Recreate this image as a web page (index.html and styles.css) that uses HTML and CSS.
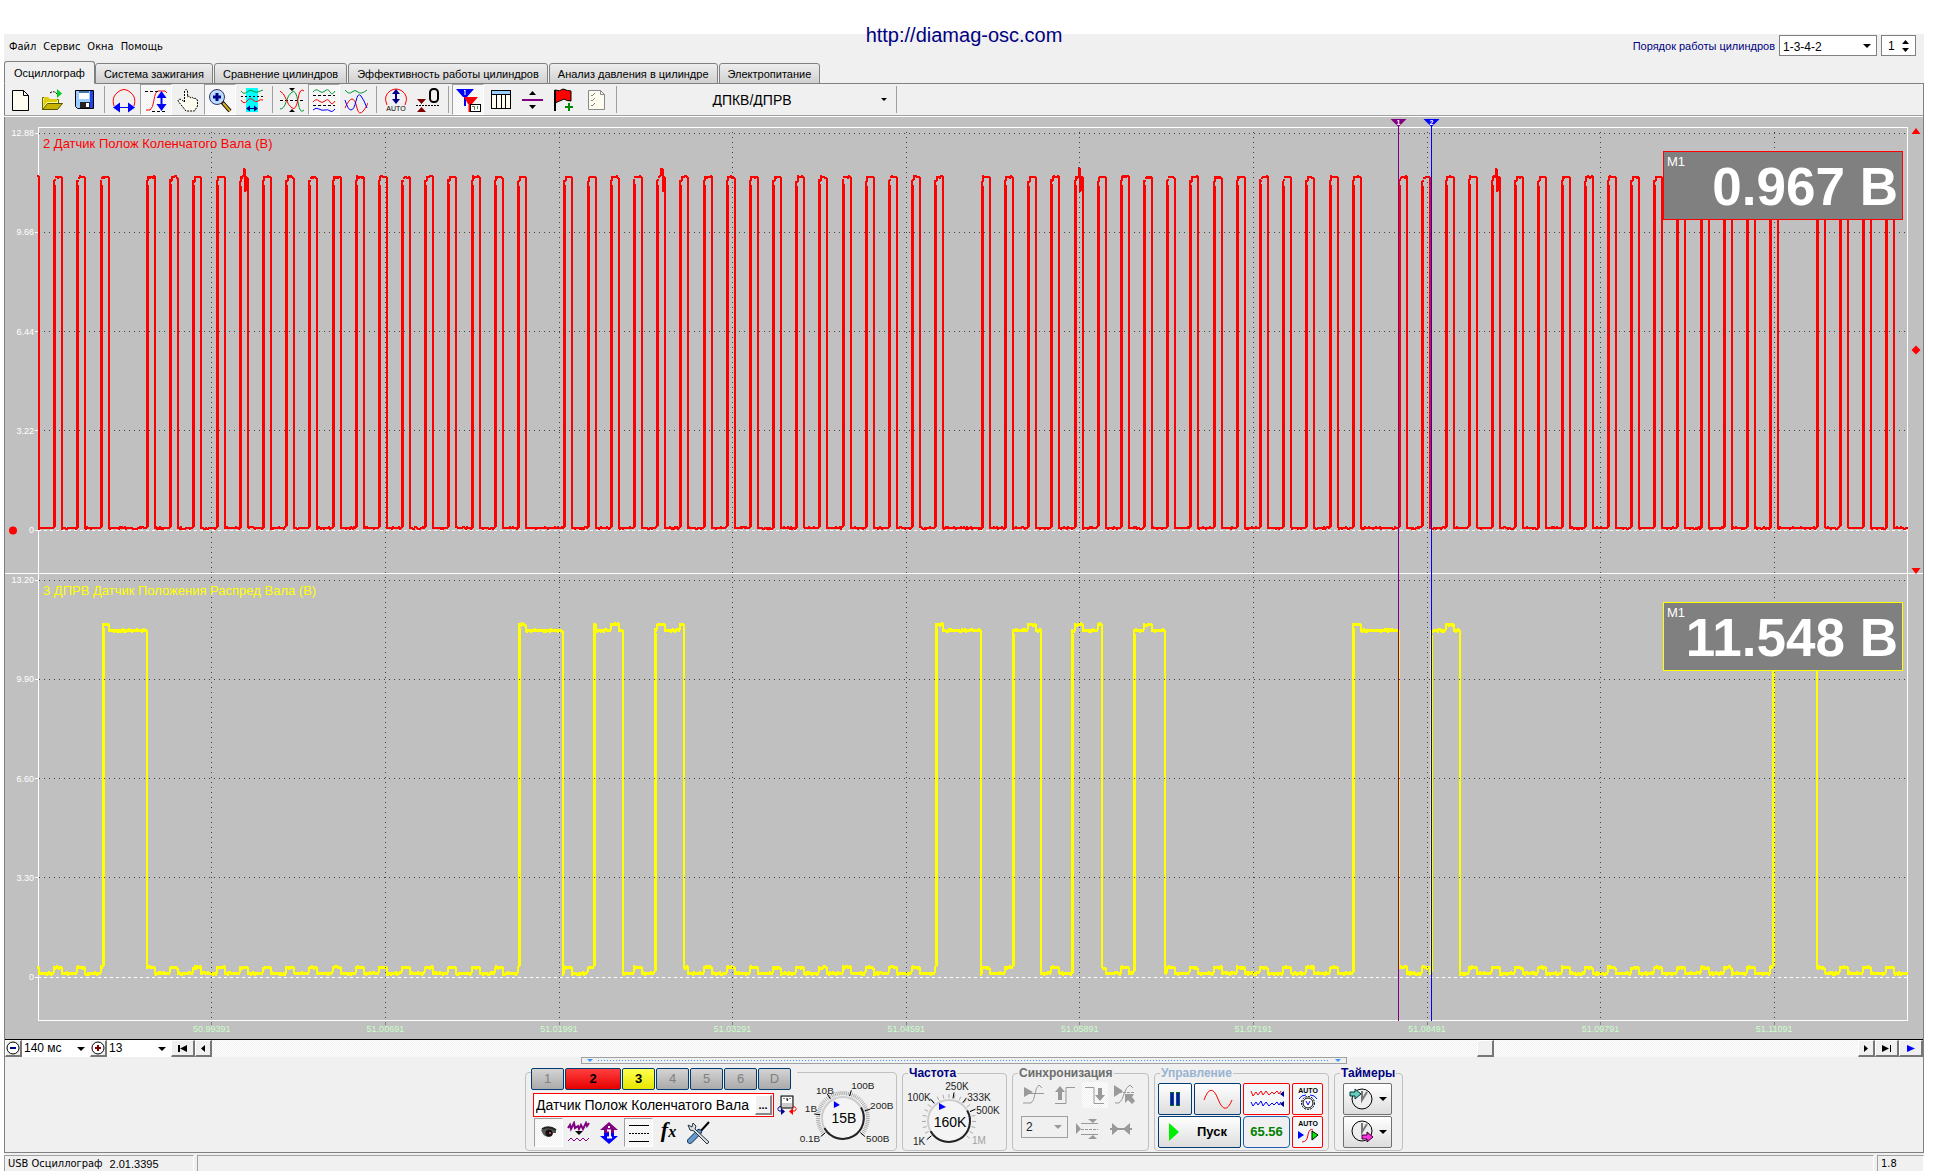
FILE: index.html
```html
<!DOCTYPE html>
<html lang="ru">
<head>
<meta charset="utf-8">
<title>USB Осциллограф</title>
<link rel="stylesheet" href="styles.css">
</head>
<body>
<div class="window">
  <a class="site-link" href="http://diamag-osc.com">http://diamag-osc.com</a>

  <header class="menubar">
    <nav class="menu">
      <button>Файл</button><button>Сервис</button><button>Окна</button><button>Помощь</button>
    </nav>
    <div class="firing">
      <label for="order">Порядок работы цилиндров</label>
      <select id="order" class="field order"><option>1-3-4-2</option></select>
      <div class="spin field">
        <input type="text" value="1" aria-label="Номер цилиндра">
        <svg width="8" height="14" viewBox="0 0 8 14"><path d="M0 5h7L3.500 1zM0 9h7L3.500 13z"/></svg>
      </div>
    </div>
  </header>

  <div class="tabs" role="tablist">
    <button class="tab active" role="tab">Осциллограф</button>
    <button class="tab" role="tab">Система зажигания</button>
    <button class="tab" role="tab">Сравнение цилиндров</button>
    <button class="tab" role="tab">Эффективность работы цилиндров</button>
    <button class="tab" role="tab">Анализ давления в цилиндре</button>
    <button class="tab" role="tab">Электропитание</button>
  </div>

  <main class="page">
    <div class="toolbar">
      <button class="tool" aria-label="Новый"><svg viewBox="0 0 24 24"><path d="M4.500 2.500h11l5 5v15h-16z" fill="#fffdf0" stroke="#000"/><path d="M15.500 2.500v5h5" fill="none" stroke="#000"/></svg></button>
      <button class="tool" aria-label="Открыть"><svg viewBox="0 0 24 24"><path d="M2.500 21.500v-12h5l2 2h9v4" fill="#ff9" stroke="#660"/><path d="M2.500 21.500l5-6h15l-5 6z" fill="#c8b400" stroke="#550"/><path d="M4 9h4l2 2h7v3H7l-4 5z" fill="#e0cc10"/><path d="M17 1v9l5-4.500z" fill="#0c2"/><path d="M10 5q4-3 7 1" fill="none" stroke="#000" stroke-dasharray="2 1"/></svg></button>
      <button class="tool" aria-label="Сохранить"><svg viewBox="0 0 24 24"><path d="M3.500 2.500h18v18h-16l-2-2z" fill="#9cf" stroke="#000"/><path d="M18 3h3v17h-3z" fill="#24e"/><path d="M7 3h10v8H7z" fill="#fff"/><path d="M7 3h10v2H7z" fill="#47a"/><path d="M8 14h10v6H8z" fill="#222"/><path d="M14 15h3v4h-3z" fill="#fff"/></svg></button>
      <span class="sep"></span>
      <button class="tool" aria-label="Ширина"><svg viewBox="0 0 24 24"><path d="M2 18Q-1 9 6 4Q12-1 18 4Q25 9 22 18" fill="none" stroke="red"/><path d="M7 19.500h10" stroke="#00f"/><path d="M1 19.500l7-5v10zM23 19.500l-7-5v10z" fill="#00f"/></svg></button>
      <button class="tool on" aria-label="Высота"><svg viewBox="0 0 24 24"><path d="M2 22h4q3-2 4-10T14 3h7l2 2" fill="none" stroke="red"/><path d="M1 3.500h14M8 23.500h14" stroke="#000" stroke-dasharray="3 2"/><path d="M17.500 8v10" stroke="#00f" stroke-width="2"/><path d="M17.500 3l5 7h-10zM17.500 23l5-7h-10z" fill="#00f"/></svg></button>
      <button class="tool" aria-label="Рука"><svg viewBox="0 0 24 24"><path d="M8.500 14V3q2-3 3 0v6q2-2 3 1q2-2 3 1q3-2 4 2v5l-3 5H10l-4-5-4-5q1-3 4-1z" fill="#fffdf0" stroke="#000" stroke-dasharray="2 1"/></svg></button>
      <button class="tool on" aria-label="Масштаб"><svg viewBox="0 0 24 24"><path d="M14 14l8 9" stroke="#000" stroke-width="4"/><path d="M15 15l7 8" stroke="#da2" stroke-width="2"/><circle cx="9" cy="9" r="7.500" fill="#bdf" stroke="#336"/><path d="M9 5v8M5 9h8" stroke="#008" stroke-width="3"/></svg></button>
      <button class="tool" aria-label="Окно времени"><svg viewBox="0 0 24 24"><path d="M6 0h12v24H6z" fill="#0ff"/><path d="M1 3q3 4 6 1t6-1 5 1 5-2" fill="none" stroke="#093"/><path d="M1 12q3 5 6 1t6-1 5 1 5-1" fill="none" stroke="red"/><path d="M1 8.500h22" stroke="#000" stroke-dasharray="2 2"/><path d="M8 20.500h8" stroke="#008"/><path d="M6 20.500l4-3v6zM18 20.500l-4-3v6z" fill="#008"/></svg></button>
      <span class="sep"></span>
      <button class="tool" aria-label="Слияние"><svg viewBox="0 0 24 24"><path d="M0 12.500h24" stroke="#000" stroke-dasharray="3 2"/><path d="M0 21q4 0 6-7T12 4t6 10 6 8" fill="none" stroke="#093"/><path d="M0 3q4 2 6 8t6 9 6-9 6-8" fill="none" stroke="red"/><path d="M9 0h6l-3 3zM9 24h6l-3-3z"/></svg></button>
      <button class="tool on" aria-label="Раздельно"><svg viewBox="0 0 24 24"><path d="M1 4q3-4 6-1t6 0 5 1 5-1" fill="none" stroke="#093"/><path d="M1 14q3-4 6-1t6 0 5 1 5-1" fill="none" stroke="red"/><path d="M1 22q3-3 6-1t6 1 5 1 5-2" fill="none" stroke="#00f"/><path d="M1 7.500h22M1 17.500h22" stroke="#000" stroke-dasharray="3 2"/></svg></button>
      <button class="tool" aria-label="Наложение"><svg viewBox="0 0 24 24"><path d="M1 2q4 5 7 2t6 0 9-2" fill="none" stroke="#093"/><path d="M1 20q4-9 7-9t5 9 7 2 3-7" fill="none" stroke="red"/><path d="M1 12q3 10 6 10t5-9 5-5 6 12" fill="none" stroke="#00f"/></svg></button>
      <span class="sep"></span>
      <button class="tool" aria-label="Авто"><svg viewBox="0 0 24 24"><path d="M3 17Q-1 8 6 3Q12-1 18 3Q25 8 21 17" fill="none" stroke="red"/><path d="M12 5v8" stroke="#008" stroke-width="2"/><path d="M12 1l4 5H8zM12 16l4-5H8z" fill="#008"/><text x="12" y="23" text-anchor="middle" class="tiny">AUTO</text></svg></button>
      <button class="tool" aria-label="Ноль"><svg viewBox="0 0 24 24"><path d="M1 11h9l-4.500 5zM1 24h9l-4.500-5z" fill="#800000"/><path d="M0 17.500h24" stroke="#000" stroke-dasharray="2 1"/><rect x="14" y="1" width="8" height="13" rx="3.500" fill="none" stroke="#000" stroke-width="2"/></svg></button>
      <span class="sep"></span>
      <button class="tool on" aria-label="Маркеры"><svg viewBox="0 0 24 24"><path d="M0 1h18l-7 8H7z" fill="#00f"/><path d="M9 8v10" stroke="#00f" stroke-width="2"/><path d="M8 9h14l-6 7h-4z" fill="red"/><path d="M13.500 14v10" stroke="red" stroke-width="2"/><path d="M8 3l1-1v5" stroke="#fff" fill="none"/><rect x="14.500" y="16.500" width="10" height="7" fill="#fff" stroke="#000"/><path d="M16 18.500h3M18.500 18v4M21.500 18v3" stroke="#585"/></svg></button>
      <button class="tool" aria-label="Таблица"><svg viewBox="0 0 24 24"><rect x="3.500" y="2.500" width="19" height="18" fill="#fffdf0" stroke="#000"/><path d="M4 3h18v3H4z" fill="#9cf"/><path d="M4 6.500h18M8.500 7v14M13.500 7v14M17.500 7v14" stroke="#000"/></svg></button>
      <button class="tool" aria-label="Разделитель"><svg viewBox="0 0 24 24"><path d="M2 12h21" stroke="#800080" stroke-width="2"/><path d="M9 7h7l-3.500-4zM9 17h7l-3.500 4z"/></svg></button>
      <button class="tool" aria-label="Добавить метку"><svg viewBox="0 0 24 24"><path d="M3 2q5 2 8-1 5 2 8 2v10q-4 0-7-2-4 2-9 4z" fill="red" stroke="#000"/><path d="M3 2v21" stroke="#000" stroke-width="2"/><path d="M17 15v8M13 19h8" stroke="#080" stroke-width="2"/></svg></button>
      <button class="tool" aria-label="Список"><svg viewBox="0 0 24 24"><path d="M4.500 2.500h12l4 4v15h-16z" fill="#fffdf0" stroke="#888"/><path d="M16.500 2.500v4h4" fill="none" stroke="#888"/><path d="M7 7l1 1 3-3M7 12l1 1 3-3M7 17l1 1 3-3" fill="none" stroke="#888"/></svg></button>
      <span class="sep"></span>
      <select class="preset" aria-label="Режим"><option>ДПКВ/ДПРВ</option></select>
      <span class="sep"></span>
    </div>

    <section class="scope" id="scope">
      <svg class="plot" id="plot"></svg>
      <div class="gutter"></div>
      <div class="track red">
        <div class="scale"><span>12.88</span><span>9.66</span><span>6.44</span><span>3.22</span><span>0</span></div>
        <h2>2 Датчик Полож Коленчатого Вала (В)</h2>
        <div class="meter"><small>M1</small><output>0.967 В</output></div>
      </div>
      <div class="track yellow">
        <div class="scale"><span>13.20</span><span>9.90</span><span>6.60</span><span>3.30</span><span>0</span></div>
        <h2>3 ДПРВ Датчик Положения Распред Вала (В)</h2>
        <div class="meter"><small>M1</small><output>11.548 В</output></div>
      </div>
      <div class="times">
        <span>50.99391</span><span>51.00691</span><span>51.01991</span><span>51.03291</span><span>51.04591</span><span>51.05891</span><span>51.07191</span><span>51.08491</span><span>51.09791</span><span>51.11091</span>
      </div>
    </section>

    <div class="timebar">
      <button class="step" aria-label="Меньше"><svg width="14" height="14" viewBox="0 0 14 14"><circle cx="7" cy="7" r="6" fill="#fff" stroke="#000"/><path d="M4 7h6" stroke="#008" stroke-width="2"/></svg></button>
      <select class="span" aria-label="Развёртка"><option>140  мс</option></select>
      <button class="step" aria-label="Больше"><svg width="14" height="14" viewBox="0 0 14 14"><circle cx="7" cy="7" r="6" fill="#fff" stroke="#000"/><path d="M4 7h6M7 4v6" stroke="#800000" stroke-width="2"/></svg></button>
      <select class="zoom" aria-label="Масштаб"><option>13</option></select>
      <button class="step wide" aria-label="В начало"><svg width="12" height="9" viewBox="0 0 12 9"><path d="M1 1h2v7H1zM3 4.500L10 1v7z"/></svg></button>
      <button class="step" aria-label="Назад"><svg width="6" height="9" viewBox="0 0 6 9"><path d="M1 4.500L5 1v7z"/></svg></button>
      <div class="rail"><span class="rail-before"></span><button class="step" aria-label="Позиция"></button><span class="rail-after"></span></div>
      <button class="step" aria-label="Вперёд"><svg width="6" height="9" viewBox="0 0 6 9"><path d="M5 4.500L1 1v7z"/></svg></button>
      <button class="step wide" aria-label="В конец"><svg width="12" height="9" viewBox="0 0 12 9"><path d="M9 1h1v7H9zM8 4.500L1 1v7z"/></svg></button>
      <button class="step wide" aria-label="Воспроизвести"><svg width="10" height="9" viewBox="0 0 10 9"><path d="M9 4.500L1 1v7z" fill="#00f"/></svg></button>
    </div>

    <section class="panel">
      <div class="splitter"><i></i><span></span><i></i></div>
      <div class="groups">
        <div class="channels">
          <div class="chan-side">
            <div class="chan-row">
              <button class="chan">1</button><button class="chan c2">2</button><button class="chan c3">3</button><button class="chan">4</button><button class="chan">5</button><button class="chan">6</button><button class="chan">D</button>
            </div>
            <div class="name-row">
              <div class="name-box"><input type="text" value="Датчик Полож Коленчатого Вала" aria-label="Имя канала"><button>...</button></div>
              <svg width="20" height="20" viewBox="0 0 20 20"><rect x="4" y="1" width="12" height="12" fill="#ccc" stroke="#000"/><path d="M5 2h10v6H5z" fill="#fff"/><path d="M7 3v1M10 3v2M13 3v1M10 6l1-2" fill="none" stroke="#000"/><path d="M4 11q-5 2-2 5h3" fill="none" stroke="#008"/><path d="M4 13l4 3.500-4 3.500z" fill="#008"/><path d="M16 11q5 2 2 5h-3" fill="none" stroke="red"/><path d="M16 13l-4 3.500 4 3.500z" fill="red"/></svg>
            </div>
            <div class="opt-row">
              <button class="opt on" aria-label="Видимость"><svg viewBox="0 0 24 24"><path d="M4 9q7-5 15 0v3h-3q0 4-5 4-5-1-6-5z" fill="#555"/><path d="M5 8q7-4 14 1" stroke="#222" fill="none" stroke-width="2"/><circle cx="12" cy="12" r="3.500" fill="#111"/><circle cx="13" cy="12" r="1" fill="#e66"/></svg></button>
              <button class="opt" aria-label="Фильтр"><svg viewBox="0 0 24 24"><path d="M1 7l2-3 1 4 3-6 1 5 3-2 1 3 2-4 2 4 3-6 1 3 2-3" fill="none" stroke="#800080" stroke-width="2"/><path d="M8 10h8l-4 4z"/><path d="M1 20l3-3 3 3 3-3 3 3 3-3 3 3 3-3" fill="none" stroke="#800080"/></svg></button>
              <button class="opt" aria-label="Инверсия"><svg viewBox="0 0 24 24"><path d="M12 1l9 8h-4v3H7V9H3z" fill="#800080"/><path d="M12 23l9-8h-4v-3H7v3H3z" fill="#00f"/><path d="M10 9.500h3v7M10 16.500h5M11 6h2" stroke="#fff" stroke-width="2" fill="none"/></svg></button>
              <button class="opt on" aria-label="Линии"><svg viewBox="0 0 24 24"><path d="M2 4.500h20M2 20.500h20" stroke="#000"/><path d="M2 12.500h20" stroke="#000" stroke-dasharray="2 1"/></svg></button>
              <button class="opt fx" aria-label="Функция">f<sub>x</sub></button>
              <button class="opt" aria-label="Настройки"><svg viewBox="0 0 24 24"><path d="M22 1L12 12" stroke="#000" stroke-width="2"/><path d="M12 11l-9 9" stroke="#246" stroke-width="6" stroke-linecap="round"/><path d="M12 11l-9 9" stroke="#69c" stroke-width="4" stroke-linecap="round"/><path d="M1 4l4 2 1-4 3 3-1 3 14 13-2 2L7 10l-4-1z" fill="#ddd" stroke="#234"/></svg></button>
            </div>
          </div>
          <svg class="dial" width="99" height="77" viewBox="797 1073 99 77" id="dialV" data-cx="843" data-cy="1118">
            <g class="ticks"></g>
            <circle cx="843" cy="1118" r="21" class="knob"/><circle cx="843" cy="1118" r="21" class="rim"/>
            <path d="M834 1101v7l6-3z" fill="#00f"/>
            <text x="844" y="1123" class="reading">15В</text>
            <text x="825" y="1094">10В</text><text x="863" y="1089">100В</text><text x="811" y="1112">1В</text><text x="882" y="1109">200В</text><text x="810" y="1142">0.1В</text><text x="878" y="1142">500В</text>
          </svg>
        </div>

        <fieldset class="freq">
          <legend>Частота</legend>
          <svg class="dial" width="103" height="71" viewBox="902 1079 103 71" id="dialF" data-cx="948" data-cy="1121">
            <g class="ticks"></g>
            <circle cx="948" cy="1121" r="21" class="knob"/><circle cx="948" cy="1121" r="21" class="rim"/>
            <path d="M938 1103v7l7-3z" fill="#00f"/>
            <text x="949" y="1127" class="reading">160K</text>
            <text x="918" y="1101">100K</text><text x="956" y="1090">250K</text><text x="978" y="1101">333K</text><text x="987" y="1114">500K</text><text x="918" y="1145">1K</text><text x="978" y="1144" class="dim">1M</text>
          </svg>
        </fieldset>

        <fieldset class="sync" disabled>
          <legend>Синхронизация</legend>
          <div class="sync-row">
            <button class="opt" aria-label="Синхронизация по уровню"><svg viewBox="0 0 24 24"><path d="M2 4v10l9-5z" fill="#999"/><path d="M1 20h8q3-2 4-9t4-9l3 3" fill="none" stroke="#999"/><path d="M2 10.500h20" stroke="#999"/></svg></button>
            <button class="opt" aria-label="По фронту"><svg viewBox="0 0 24 24"><path d="M2 20.500h11v-16h9" fill="none" stroke="#999"/><path d="M5 17V9H2l5-6 5 6H9v8z" fill="#999"/></svg></button>
            <button class="opt hatch" aria-label="По спаду"><svg viewBox="0 0 24 24"><path d="M2 4.500h9v16h10" fill="none" stroke="#999"/><path d="M15 5v7h-3l5 6 5-6h-3V5z" fill="#999"/></svg></button>
            <button class="opt" aria-label="По выбору"><svg viewBox="0 0 24 24"><path d="M1 2v12l9-6z" fill="#999"/><path d="M2 20h4q3-2 5-9t6-9l3 3" fill="none" stroke="#999"/><path d="M2 9.500h20" stroke="#999" stroke-dasharray="3 1"/><path d="M12 11h9l-2 3 3 4-3 3-4-4-3 3z" fill="#999"/></svg></button>
          </div>
          <div class="sync-row low">
            <select aria-label="Канал синхронизации"><option>2</option></select>
            <button class="opt" aria-label="Уровень"><svg viewBox="0 0 24 24"><path d="M1 7v11l5-5z" fill="#999"/><path d="M6 7.500h17M6 18.500h17" stroke="#999"/><path d="M6 13.500h17" stroke="#999" stroke-dasharray="3 1"/><path d="M13 3h9l-4 4zM13 23h9l-4-4z" fill="#999"/></svg></button>
            <button class="opt" aria-label="Ширина"><svg viewBox="0 0 24 24"><path d="M1 13h22" stroke="#999" stroke-width="2"/><path d="M3 7l7 6-7 6zM21 7l-7 6 7 6z" fill="#999"/></svg></button>
          </div>
        </fieldset>

        <fieldset class="control">
          <legend>Управление</legend>
          <div class="control-grid">
            <button class="key" aria-label="Пауза"><svg width="12" height="14" viewBox="0 0 12 14"><path d="M1 0h4v14H1zM7 0h4v14H7z" fill="#063"/><path d="M2 1h2v12H2zM8 1h2v12H8z" fill="#00f"/></svg></button>
            <button class="key" aria-label="Генератор"><svg width="30" height="20" viewBox="0 0 30 20"><path d="M1 11Q8-8 15 10T29 11" fill="none" stroke="red"/></svg></button>
            <button class="key hot" aria-label="Потоки"><svg width="34" height="22" viewBox="0 0 34 22"><path d="M1 3l2 5 3-4 2 3 3-4 2 4 3-4 3 4 3-3 2 2 3-3 2 3 2-3" fill="none" stroke="red"/><path d="M1 14l2 4 3-4 2 3 3-4 2 5 3-4 3 4 3-3 2 2 3-3 2 3 2-3" fill="none" stroke="#00f"/><path d="M34 3v6l-4-3zM34 13v6l-4-3z" fill="#008"/></svg></button>
            <button class="key hot" aria-label="Авто режим"><svg width="24" height="24" viewBox="0 0 24 24"><text x="12" y="6" text-anchor="middle" class="tiny bold">AUTO</text><circle cx="12" cy="16" r="6.500" fill="none" stroke="#000" stroke-dasharray="2 1"/><circle cx="12" cy="16" r="5" fill="#fff" stroke="#000"/><path d="M10 14l2 4 2-4" stroke="#00f" fill="none"/><path d="M3 12q2-4 7-4M21 12q-2-4-7-4" stroke="#00f" fill="none"/></svg></button>
            <button class="key start"><svg width="10" height="18" viewBox="0 0 10 18"><path d="M0 0v18l10-9z" fill="#0e0"/></svg><span>Пуск</span></button>
            <output class="key rate">65.56</output>
            <button class="key hot" aria-label="Автозапуск"><svg width="24" height="24" viewBox="0 0 24 24"><text x="12" y="6" text-anchor="middle" class="tiny bold">AUTO</text><path d="M2 11v8l6-4z" fill="#00f"/><path d="M6 22q5 0 6-7t5-5" stroke="red" fill="none"/><path d="M16 11v9l6-5z" fill="#0e0" stroke="#000"/></svg></button>
          </div>
        </fieldset>

        <fieldset class="timers">
          <legend>Таймеры</legend>
          <button class="key timer" aria-label="Таймер старта"><svg width="26" height="24" viewBox="0 0 26 24"><circle cx="14" cy="12" r="10" fill="#eee" stroke="#000"/><path d="M14 4v9l5-8" fill="none" stroke="#777" stroke-width="2"/><path d="M2 5h5V2l6 5-6 5V9H2z" fill="#6cb" stroke="#033"/></svg><i class="caret"></i></button>
          <button class="key timer" aria-label="Таймер остановки"><svg width="26" height="24" viewBox="0 0 26 24"><circle cx="14" cy="11" r="10" fill="#eee" stroke="#000"/><path d="M14 3v9l5-8" fill="none" stroke="#777" stroke-width="2"/><path d="M14 15h5v-3l6 5-6 5v-3h-5z" fill="#f3d" stroke="#303"/></svg><i class="caret"></i></button>
        </fieldset>
      </div>
    </section>
  </main>

  <footer class="status">
    <div class="cell product"><span class="ui">USB Осциллограф</span><span>2.01.3395</span></div>
    <div class="cell grow"></div>
    <div class="cell ver">1.8</div>
  </footer>
</div>
<script src="app.js"></script>
</body>
</html>
```
FILE: styles.css
```css
* { box-sizing: border-box; }
body { margin: 0; padding: 34px 12px 5px 4px; min-height: 100vh; background: #fff; display: flex; font: 11px/14px "Liberation Sans", Arial, sans-serif; color: #000; }
button, input, select { font: inherit; color: inherit; margin: 0; padding: 0; border: 0; background: none; border-radius: 0; }
select { appearance: none; }
.window { position: relative; flex: 1; min-width: 0; display: flex; flex-direction: column; background: #f0f0f0; }

.site-link { position: absolute; left: 0; right: 0; top: -10px; margin: 0 auto; width: max-content; font-size: 20px; line-height: 22px; color: #000080; text-decoration: none; }

.menubar { height: 27px; display: flex; justify-content: space-between; align-items: flex-start; padding: 0 8px 0 5px; }
.menu { display: flex; gap: 7px; padding-top: 6px; font-family: "DejaVu Sans Condensed", "DejaVu Sans", sans-serif; }
.firing { display: flex; gap: 4px; padding-top: 1px; color: #000080; line-height: 22px; }
.field { height: 21px; border: 1px solid #808080; background-color: #fff; color: #000; font-size: 12px; }
.order { width: 98px; padding-left: 3px; background: #fff url("data:image/svg+xml,%3Csvg xmlns='http://www.w3.org/2000/svg' width='8' height='4'%3E%3Cpath d='M0 0h8L4 4z'/%3E%3C/svg%3E") no-repeat right 5px center; }
.spin { width: 35px; display: flex; align-items: center; }
.spin input { width: 20px; padding-left: 6px; }

.tabs { display: flex; align-items: flex-end; height: 23px; gap: 1px; position: relative; z-index: 1; }
.tab { height: 21px; padding: 0 8px; border: 1px solid #808080; border-radius: 3px 3px 0 0; background: linear-gradient(#eee, #d0d0d0); line-height: 18px; white-space: nowrap; }
.tab.active { height: 23px; padding: 0 9px; margin-right: -1px; background: #f0f0f0; border-bottom-color: #f0f0f0; }

.page { flex: 1; display: flex; flex-direction: column; border: 1px solid #808080; margin-top: -1px; min-height: 0; }
.toolbar { display: flex; align-items: stretch; height: 33px; border-bottom: 1px solid #fff; box-shadow: inset 0 -1px #a0a0a0; padding-bottom: 1px; margin-left: -1px; }
.tool { width: 32px; display: flex; align-items: center; justify-content: center; }
.tool svg { width: 24px; height: 24px; overflow: visible; }
.on, .hatch { background: repeating-conic-gradient(#fff 0 25%, #f0f0f0 0 50%) 0 0 / 2px 2px; }
.on { border: 1px solid #a0a0a0; border-right-color: #fff; border-bottom-color: #fff; }
.sep { width: 8px; display: flex; justify-content: center; padding: 2px 0; }
.sep::before { content: ""; width: 1px; background: #a0a0a0; }
.preset { width: 272px; padding-right: 8px; font-size: 14px; text-align: center; text-align-last: center; background: url("data:image/svg+xml,%3Csvg xmlns='http://www.w3.org/2000/svg' width='6' height='3'%3E%3Cpath d='M0 0h6L3 3z'/%3E%3C/svg%3E") no-repeat right 5px center; }
.tiny { font: 7px "Liberation Sans", sans-serif; }
.bold { font-weight: bold; }

.scope { position: relative; flex: 1; min-height: 300px; display: flex; flex-direction: column; background: #c0c0c0; border-bottom: 1px solid #000; }
.plot { position: absolute; left: 0; top: 0; width: 100%; height: 100%; }
.gutter { height: 10px; }
.track { flex: 1; display: flex; position: relative; min-height: 0; }
.scale { width: 33px; padding: 0 4px 38px 0; display: flex; flex-direction: column; justify-content: space-between; text-align: right; font-size: 9px; line-height: 12px; color: #fff; }
.track h2 { flex: 1; margin: 0; padding: 9px 0 0 5px; font-size: 13px; font-weight: normal; line-height: 16px; }
.red { color: red; }
.yellow { color: #ff0; }
.meter { width: 240px; height: 69px; margin: 24px 20px 0 0; border: 1px solid red; background: #808080; color: #fff; display: flex; justify-content: space-between; }
.yellow .meter { border-color: #ff0; margin-top: 28px; }
.meter small { width: 0; padding: 3px 0 0 3px; font-size: 13px; }
.meter output { font-size: 53px; line-height: 69px; font-weight: bold; padding-right: 4px; white-space: nowrap; }
.times { height: 18px; display: grid; grid-template-columns: repeat(10, 1fr); padding: 0 62px 0 120px; text-align: center; font-size: 9px; line-height: 16px; color: #c8ffc8; }

.timebar { display: flex; height: 17px; background: #fff; font-size: 12px; line-height: 16px; }
.step { width: 17px; display: flex; align-items: center; justify-content: center; background: #f0f0f0; border: 1px solid #fff; border-right: 2px solid #777; border-bottom: 2px solid #777; }
.step svg { flex: none; }
.wide { width: 24px; }
.span, .zoom { padding: 0 0 2px 2px; background: url("data:image/svg+xml,%3Csvg xmlns='http://www.w3.org/2000/svg' width='8' height='4'%3E%3Cpath d='M0 0h8L4 4z'/%3E%3C/svg%3E") no-repeat right 5px center; white-space: pre; }
.span { width: 68px; }
.zoom { width: 64px; }
.rail { flex: 1; display: flex; background: repeating-conic-gradient(#fff 0 25%, #f0f0f0 0 50%) 0 0 / 2px 2px; }
.rail-before { flex: 1264; }
.rail-after { flex: 364; }

.panel { height: 95px; display: flex; flex-direction: column; align-items: center; justify-content: space-between; padding-bottom: 1px; }
.splitter { width: 766px; height: 7px; border: 1px solid #a0a0a0; display: flex; align-items: center; gap: 5px; padding: 0 5px; }
.splitter span { flex: 1; height: 1px; background: repeating-linear-gradient(90deg, #3c96ff 0 1px, transparent 1px 3px); }
.splitter i { border: 3px solid transparent; border-top-color: #3c96ff; border-bottom: 0; }
.groups { display: flex; align-items: flex-end; gap: 5px; }
fieldset { min-width: 0; margin: 0; padding: 0; border: 1px solid #c0c0c0; border-radius: 4px; height: 84px; }
legend { margin-left: 5px; padding: 0 1px; font-weight: bold; font-size: 12px; line-height: 12px; color: #000080; }

.channels { display: flex; width: 372px; height: 79px; border: 1px solid #c0c0c0; border-radius: 4px; padding-left: 5px; }
.chan-side { width: 267px; margin-top: -5px; }
.chan-row { display: flex; gap: 1px; height: 23px; background: #f0f0f0; }
.chan { width: 33px; height: 22px; border: 1px solid #003c74; border-radius: 2px; background: linear-gradient(#d4d4d4, #aaa); color: #808080; font-size: 13px; }
.c2 { width: 56px; background: linear-gradient(#ff4040, #e60000); color: #000; font-weight: bold; }
.c3 { background: linear-gradient(#ffff50, #e6e600); color: #000; font-weight: bold; }
.name-row { display: flex; gap: 3px; padding: 2px 0 0 2px; align-items: center; }
.name-box { width: 241px; height: 24px; border: 1px solid red; background: #fff; display: flex; padding: 1px; }
.name-box input { flex: 1; min-width: 0; font-size: 14px; padding-left: 1px; }
.name-box button { width: 17px; background: #f0f0f0; border: 1px solid #fff; border-right: 2px solid #888; border-bottom: 2px solid #888; font-weight: bold; line-height: 10px; }
.opt-row { display: flex; padding: 1px 0 0 3px; gap: 1px; }
.opt { width: 29px; height: 29px; display: flex; align-items: center; justify-content: center; }
.opt svg { width: 24px; height: 24px; }
.fx { font: italic bold 22px/24px "Liberation Serif", serif; align-items: baseline; }
.fx sub { font-size: 16px; line-height: 10px; vertical-align: baseline; }

.dial { display: block; }
.dial text { font-size: 10px; text-anchor: middle; fill: #222; }
.dial .reading { font-size: 14px; fill: #000; }
.dial .dim { fill: #a0a0a0; }
.knob { fill: #f4f4f4; stroke: #ccc; stroke-width: 2; }
.rim { fill: none; stroke: #222; stroke-width: 2; stroke-dasharray: 66 66; transform-box: fill-box; transform-origin: center; transform: rotate(-30deg); }

.freq { width: 105px; }
.sync { width: 137px; }
.sync legend { color: #6d6d6d; }
.sync-row { display: flex; justify-content: space-between; padding: 3px 8px 0 6px; }
.sync-row .opt { height: 26px; }
.sync-row .hatch { width: 26px; }
.low { padding: 8px 13px 0 8px; }
.low select { width: 47px; height: 22px; padding-left: 4px; color: #222; font-size: 12px; border: 1px solid #a0a0a0; background: url("data:image/svg+xml,%3Csvg xmlns='http://www.w3.org/2000/svg' width='8' height='4'%3E%3Cpath d='M0 0h8L4 4z' fill='%23999'/%3E%3C/svg%3E") no-repeat right 5px center; opacity: 1; }
.low .opt { height: 24px; }

.control { width: 175px; }
.control legend { color: #99b4d1; }
.control-grid { display: grid; grid-template-columns: 34px 47px 47px 31px; grid-auto-rows: 32px; gap: 1px 2px; padding: 4px 0 0 3px; }
.key { display: flex; align-items: center; justify-content: center; border: 1px solid #003c74; border-radius: 2px; background: linear-gradient(#fff, #ddd); }
.hot { border-color: red; background: #f4f7fa; }
.start { grid-column: span 2; justify-content: flex-start; padding-left: 10px; gap: 18px; font-size: 13px; font-weight: bold; }
.rate { border-color: #2060b0; border-radius: 4px; background: #f0f0f0; color: #008000; font-size: 13px; font-weight: bold; }
.timers { width: 69px; }
.timer { width: 49px; height: 32px; margin: 4px 0 0 8px; border-color: #707070; gap: 5px; }
.timer + .timer { margin-top: 1px; }
.caret { border: 4px solid transparent; border-top-color: #000; border-bottom: 0; }

.status { display: flex; gap: 3px; height: 18px; padding-top: 2px; }
.cell { border: 1px solid #a0a0a0; border-right-color: #fff; border-bottom: 0; padding-left: 3px; line-height: 16px; white-space: nowrap; }
.product { width: 190px; display: flex; gap: 7px; }
.ui, .ver { font-family: "DejaVu Sans Condensed", "DejaVu Sans", sans-serif; }
.grow { flex: 1; }
.ver { width: 47px; }
```
FILE: app.js
```js
const NS = "http://www.w3.org/2000/svg";
const plot = document.getElementById("plot");

function add(parent, name, attrs) {
  const el = document.createElementNS(NS, name);
  for (const key in attrs) el.setAttribute(key, attrs[key]);
  parent.appendChild(el);
  return el;
}

// Crankshaft teeth: 17 teeth and one missing per 18 steps.
const REV = 417.4, STEP = REV / 18;
const teeth = [];
for (let rev = -1; rev < 5; rev++)
  for (let k = 0; k < 17; k++) {
    const x = 108.5 + rev * REV + k * STEP;
    if (x + 8 > 0 && x < 1870) teeth.push({ x, spike: k === 4 });
  }
// Camshaft pulses, start and end.
const cams = [[65, 109], [481, 525], [556, 585], [617, 646], [898, 943], [975, 1003], [1034, 1064], [1096, 1127], [1315, 1361], [1393, 1422], [1735, 1779]];

function draw() {
  plot.replaceChildren();
  const W = plot.clientWidth, H = plot.clientHeight;
  const left = 33, right = W - 15, top = 10, bottom = H - 18;
  const th = (bottom - top) / 2;
  const px = x => left + 87 + (x - 87) * (right - left - 134) / 1736;
  const py = (track, v) => top + track * th + 6 + (1 - v) * (th - 50);
  let seed = 7;
  const rnd = () => (seed = (seed * 16807) % 2147483647) / 2147483647;
  const line = (x1, y1, x2, y2, color, dash) =>
    add(plot, "path", { d: `M${x1} ${y1}L${x2} ${y2}`, stroke: color, fill: "none", "shape-rendering": "crispEdges", ...(dash ? { "stroke-dasharray": dash } : {}) });
  const mid = v => Math.floor(v) + 0.5;

  add(plot, "path", { d: `M${left + .5} ${bottom - .5}V${top + .5}H${right - .5}V${bottom - .5}Z`, fill: "none", stroke: "#fff", "shape-rendering": "crispEdges" });
  line(0, mid(top + th - 1), W, mid(top + th - 1), "#fff");
  for (let t = 0; t < 2; t++) line(left, mid(py(t, 0)), right, mid(py(t, 0)), "#fff", "3 3");

  const inside = (list, x) => list.some(([a, b]) => x >= a && x < b);
  const wave = (color, track, level, thick) => {
    let edges = "", flats = "", prev = null;
    for (let x = 0; x <= 1869; x++) {
      const X = Math.round(px(x));
      const r = rnd();
      const y = Math.round(py(track, level(x))) + (r < .12 ? -1 : r > .85 ? 1 : 0);
      if (prev !== null && Math.abs(y - prev) > 3) edges += `M${X} ${prev}V${y}`;
      flats += `M${X - 1} ${y}h2`;
      if (prev !== null && y < prev - 100) edges += `M${X + 1} ${prev - 1}V${y + 4}`;
      prev = y;
    }
    const crisp = { fill: "none", stroke: color, "shape-rendering": "crispEdges" };
    add(plot, "path", { ...crisp, d: edges, "stroke-width": 2 });
    add(plot, "path", { ...crisp, d: flats, "stroke-width": thick });
  };
  const pulses = teeth.map(t => [t.x, t.x + 8]);
  wave("#f00", 0, x => {
    if (!inside(pulses, x)) return .006;
    const t = teeth.find(t => x >= t.x && x < t.x + 8);
    const along = x - t.x;
    if (t.spike && along > 4 && along < 6.5) return along < 5.5 ? .91 : .855;
    return along < 1.5 ? .88 : .888;
  }, 2);
  wave("#ff0", 1, x => (inside(cams, x) ? .874 : .009) + (inside(pulses, x) ? .016 : 0), 3);

  for (let t = 0; t < 2; t++)
    for (let i = 0; i < 5; i++) {
      const y = mid(py(t, i / 4));
      line(left - 3, y, left, y, "#fff");
      if (i) line(left + 1, y, right - 2, y, "#404040", "1 4");
    }
  for (let i = 0; i < 10; i++) {
    const x = mid(px(173.6 * (i + .5) + 87));
    line(x, top + 5, x, bottom, "#404040", "1 4");
    line(x, bottom + 1, x, bottom + 4, "#808080");
  }

  [[1360, "#800080", "1"], [1393, "#00f", "2"]].forEach(([x, color, label]) => {
    const m = mid(px(x));
    add(plot, "path", { d: `M${m - 8} 2h16l-8 8z`, fill: color });
    line(m, 8, m, bottom, color);
    const text = add(plot, "text", { x: m, y: 8, fill: "#fff", "font-size": 7, "font-weight": "bold", "text-anchor": "middle" });
    text.textContent = label;
  });

  const rx = W - 7;
  add(plot, "path", { d: `M${rx - 4.5} 17h9l-4.500-6zM${rx - 4.5} ${top + th - 6}h9l-4.500 6zM${rx} ${top + th / 2 - 5}l4.500 4.500-4.500 4.500-4.500-4.500z`, fill: "red" });
  add(plot, "circle", { cx: 8, cy: mid(py(0, 0)), r: 4, fill: "red" });
}

function ticks(id, count, marks) {
  const svg = document.getElementById(id);
  const g = svg.querySelector(".ticks");
  const cx = +svg.dataset.cx, cy = +svg.dataset.cy;
  const ray = (deg, r1, r2, color) => {
    const a = deg * Math.PI / 180, s = Math.sin(a), c = Math.cos(a);
    add(g, "path", { d: `M${cx + r1 * s} ${cy - r1 * c}L${cx + r2 * s} ${cy - r2 * c}`, stroke: color });
  };
  for (let i = 0; i <= count; i++) ray(-130 + 260 * i / count, 23, 27, "#aaa");
  marks.forEach(m => ray(m, 23, 29, "#000"));
}

ticks("dialV", 60, [-130, -82, -33, 17, 72, 130]);
ticks("dialF", 20, [-130, -40, 10, 37, 66]);
draw();
window.addEventListener("resize", draw);
```
